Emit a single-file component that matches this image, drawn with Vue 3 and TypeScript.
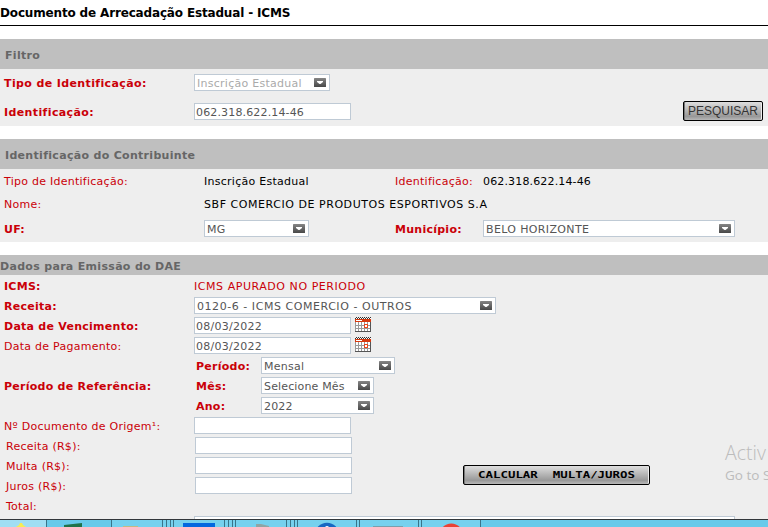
<script setup lang="ts">
import { h, type FunctionalComponent } from 'vue'

interface AmountRow {
  label: string
}

const amounts: AmountRow[] = [
  { label: 'Receita (R$):' },
  { label: 'Multa (R$):' },
  { label: 'Juros (R$):' },
]

const separators: number[] = [
  46, 111, 162, 166, 170, 173, 224, 228, 232, 235, 286, 290, 294, 297, 356, 359, 418, 421, 480,
]

const Arrow: FunctionalComponent = () =>
  h('svg', { width: 12, height: 9, viewBox: '0 0 12 9' }, [
    h('defs', [
      h('linearGradient', { id: 'arrow-face', x1: 0, y1: 0, x2: 0, y2: 1 }, [
        h('stop', { offset: 0, 'stop-color': '#858585' }),
        h('stop', { offset: 1, 'stop-color': '#484848' }),
      ]),
    ]),
    h('rect', { width: 12, height: 9, rx: 0.6, fill: 'url(#arrow-face)' }),
    h('path', { d: 'M3 3h6v1L6.5 6h-1L3 4z', fill: '#fff' }),
  ])

const Calendar: FunctionalComponent = () =>
  h('svg', { width: 16, height: 15, viewBox: '0 0 16 15', 'shape-rendering': 'crispEdges' }, [
    h('rect', { x: 0, y: 1, width: 16, height: 14, fill: '#fff' }),
    h('path', { d: 'M1 .5h15M0 1.5h16', stroke: '#333', 'stroke-dasharray': '1 1' }),
    h('path', {
      d: 'M.5 5v10M3.5 5v9M6.5 5v9M9.5 5v9M12.5 5v9M0 8.5h15M0 11.5h15',
      stroke: '#999',
      fill: 'none',
    }),
    h('rect', { x: 0, y: 2, width: 16, height: 3, fill: '#d63a10' }),
    h('rect', { x: 1, y: 3, width: 6, height: 1, fill: '#fff' }),
    h('path', { d: 'M15.5 5v10M0 14.5h16', stroke: '#555', fill: 'none' }),
    h('rect', { x: 9.5, y: 7.5, width: 3, height: 3, fill: '#fff', stroke: '#e8481c' }),
  ])
</script>

<template>
  <div class="page">
    <h1 class="title"><span>Documento de Arrecadação Estadual - ICMS</span></h1>

    <section class="panel">
      <h2 class="head"><span>Filtro</span></h2>
      <div class="row filter-type">
        <label class="label bold wide w-lead">Tipo de Identificação:</label>
        <div class="select disabled s-type"><span>Inscrição Estadual</span><Arrow /></div>
      </div>
      <div class="row filter-id">
        <label class="label bold wide w-lead">Identificação:</label>
        <div class="input digits">062.318.622.14-46</div>
        <button class="btn search">
          <svg width="78" height="18" viewBox="0 0 78 18">
            <text x="4" y="13.4" textLength="70" lengthAdjust="spacingAndGlyphs" class="search-text">PESQUISAR</text>
          </svg>
        </button>
      </div>
    </section>

    <section class="panel">
      <h2 class="head"><span>Identificação do Contribuinte</span></h2>
      <div class="row taxpayer">
        <span class="label w-tax">Tipo de Identificação:</span>
        <span class="value w-mid">Inscrição Estadual</span>
        <span class="label w-side">Identificação:</span>
        <span class="value digits">062.318.622.14-46</span>
      </div>
      <div class="row taxpayer">
        <span class="label w-tax">Nome:</span>
        <span class="value caps">SBF COMERCIO DE PRODUTOS ESPORTIVOS S.A</span>
      </div>
      <div class="row place">
        <span class="label bold w-tax">UF:</span>
        <div class="w-mid"><div class="select s-uf"><span>MG</span><Arrow /></div></div>
        <span class="label bold w-side">Município:</span>
        <div class="select s-city"><span class="city">BELO HORIZONTE</span><Arrow /></div>
      </div>
    </section>

    <section class="panel last">
      <h2 class="head thin"><span>Dados para Emissão do DAE</span></h2>
      <div class="rows">
        <div class="row">
          <span class="label bold w-lead">ICMS:</span>
          <span class="label caps">ICMS APURADO NO PERIODO</span>
        </div>
        <div class="row">
          <span class="label bold w-lead">Receita:</span>
          <div class="select s-revenue"><span class="caps">0120-6 - ICMS COMERCIO - OUTROS</span><Arrow /></div>
        </div>
        <div class="row">
          <span class="label bold w-lead">Data de Vencimento:</span>
          <div class="input">08/03/2022</div>
          <Calendar class="cal" />
        </div>
        <div class="row">
          <span class="label w-lead">Data de Pagamento:</span>
          <div class="input">08/03/2022</div>
          <Calendar class="cal" />
        </div>
        <div class="row">
          <span class="w-lead"></span>
          <span class="label bold w-period">Período:</span>
          <div class="select s-period"><span>Mensal</span><Arrow /></div>
        </div>
        <div class="row">
          <span class="label bold w-lead">Período de Referência:</span>
          <span class="label bold w-period">Mês:</span>
          <div class="select s-month"><span class="digits">Selecione Mês</span><Arrow /></div>
        </div>
        <div class="row">
          <span class="w-lead"></span>
          <span class="label bold w-period">Ano:</span>
          <div class="select s-month"><span class="digits">2022</span><Arrow /></div>
        </div>
        <div class="row">
          <span class="label w-lead">Nº Documento de Origem¹:</span>
          <div class="input"></div>
        </div>
        <div class="amounts">
          <div>
            <div v-for="a in amounts" :key="a.label" class="row">
              <span class="label w-amount">{{ a.label }}</span>
              <div class="input"></div>
            </div>
          </div>
          <button class="btn calc">
            <svg width="185" height="18" viewBox="0 0 185 18">
              <text x="14" y="12.2" textLength="157" lengthAdjust="spacingAndGlyphs" class="calc-text">CALCULAR&nbsp;&nbsp;MULTA/JUROS</text>
            </svg>
          </button>
        </div>
        <div class="row">
          <span class="label w-amount">Total:</span>
        </div>
        <div class="notes"></div>
      </div>
    </section>

    <div class="watermark">
      <div class="wm-title">Activ</div>
      <div class="wm-sub">Go to S</div>
    </div>

    <svg class="taskbar" width="768" height="8" viewBox="0 0 768 8">
      <rect width="768" height="8" fill="#67caea" />
      <rect width="46" height="8" fill="#a0def3" />
      <rect x="112" width="368" height="8" fill="#76d1ee" />
      <path d="M16 8l3-2 1-2h2l1 2 3 2z" fill="#f7ec52" />
      <path d="M64 6l18-2v4H64z" fill="#1f734a" />
      <rect x="123" y="7" width="15" height="1" fill="#c5b983" />
      <rect x="183" y="4" width="32" height="4" fill="#0268df" />
      <path d="M256 8V5l5 0 8 2v1z" fill="#8fa5a5" />
      <circle cx="327" cy="16" r="12.2" fill="#1768c2" />
      <path d="M325 8q2-2 4 0z" fill="#fff" />
      <rect x="373" y="7" width="30" height="1" fill="#799fac" />
      <circle cx="451.3" cy="16.5" r="12" fill="#ea4335" />
      <rect v-for="x in separators" :key="x" :x="x" y="0" width="1" height="8" fill="#397489" />
      <rect width="768" height="1" fill="#31363a" />
    </svg>
  </div>
</template>

<style>
body {
  margin: 0;
  overflow: hidden;
}
</style>

<style scoped>
.page {
  position: relative;
  display: flex;
  flex-direction: column;
  width: 768px;
  height: 527px;
  overflow: hidden;
  background: #fff;
  font-family: Verdana, 'DejaVu Sans', sans-serif;
  font-size: 11px;
  line-height: 16px;
  letter-spacing: 0.26px;
  white-space: nowrap;
}
.page * {
  box-sizing: border-box;
}
.title {
  flex: none;
  height: 26px;
  margin: 0 0 13px;
  padding-top: 5px;
  border-bottom: 1px solid #000;
  font-size: 12px;
  line-height: 16px;
  letter-spacing: -0.16px;
}
.panel {
  flex: none;
  margin-bottom: 13px;
  background: #eee;
}
.last {
  height: 264px;
  margin: 0;
  overflow: hidden;
}
.head {
  display: flex;
  align-items: center;
  height: 30px;
  margin: 0;
  padding: 3px 0 0 5px;
  background: #bfbfbf;
  color: #666;
  font-size: 11px;
  letter-spacing: 0.31px;
}
.thin {
  height: 20px;
  padding-left: 0;
}
.row {
  display: flex;
  align-items: center;
  height: 20px;
  padding: 0 0 1px 4px;
}
.rows {
  padding-top: 1px;
}
.filter-type {
  height: 27px;
  padding-bottom: 0;
}
.filter-id {
  height: 30px;
  padding: 1px 5px 0 4px;
}
.taxpayer {
  height: 23px;
  padding-bottom: 0;
}
.place {
  height: 27px;
  padding-bottom: 0;
}
.label,
.value {
  flex: none;
  height: 16px;
  line-height: 18px;
}
.label {
  color: #ca0008;
}
.bold {
  font-weight: bold;
}
.wide {
  letter-spacing: 0.38px;
}
.value {
  color: #000;
}
.digits {
  letter-spacing: 0.15px;
}
.caps {
  letter-spacing: 0.55px;
}
.city {
  letter-spacing: 0.36px;
}
.w-lead {
  flex: none;
  width: 190px;
}
.w-tax {
  width: 200px;
}
.w-mid {
  width: 191px;
}
.w-side {
  width: 88px;
}
.w-period {
  width: 67px;
  padding-left: 2px;
}
.w-amount {
  width: 191px;
  padding-left: 2px;
}
.input,
.select {
  display: flex;
  flex: none;
  align-items: center;
  height: 17px;
  border: 1px solid #bfcad5;
  background: #fff;
  color: #555;
  line-height: 17px;
}
.input {
  width: 157px;
  padding: 1px 0 0 1px;
}
.select {
  justify-content: space-between;
  padding: 0 3px 0 2px;
}
.select span {
  height: 15px;
}
.disabled {
  color: #aaa;
}
.s-type {
  width: 136px;
}
.s-uf {
  width: 105px;
}
.s-city {
  width: 252px;
}
.s-revenue {
  width: 302px;
}
.s-period {
  width: 134px;
}
.s-month {
  width: 113px;
}
.cal {
  flex: none;
  margin: 0 0 2px 4px;
}
.amounts {
  display: flex;
  align-items: center;
}
.btn {
  flex: none;
  height: 20px;
  padding: 0;
  border: 1px solid #000;
  border-radius: 2px;
  background: linear-gradient(#dedede, #989898 80%, #b8b8b8);
  box-shadow: inset 1px 0 #777, inset -1px 0 #eee;
  letter-spacing: 0;
}
.btn svg {
  display: block;
}
.search {
  width: 80px;
  margin: 0 0 1px auto;
}
.search-text {
  fill: #333;
  font: 12px 'Liberation Sans', sans-serif;
}
.calc {
  width: 187px;
  margin: 18px 0 0 111px;
}
.calc-text {
  fill: #000;
  font: bold 8px 'DejaVu Sans Mono', monospace;
}
.notes {
  width: 541px;
  height: 17px;
  margin-left: 194px;
  border: 1px solid #bfcad5;
  background: #fff;
}
.watermark {
  position: absolute;
  left: 725px;
  top: 440px;
  color: #bcbcbc;
  font-family: 'Open Sans', sans-serif;
  letter-spacing: 0;
}
.wm-title {
  font-size: 19.5px;
  font-weight: 300;
  line-height: 25px;
}
.wm-sub {
  font-size: 13.5px;
  line-height: 20px;
}
.taskbar {
  display: block;
  flex: none;
}
</style>
